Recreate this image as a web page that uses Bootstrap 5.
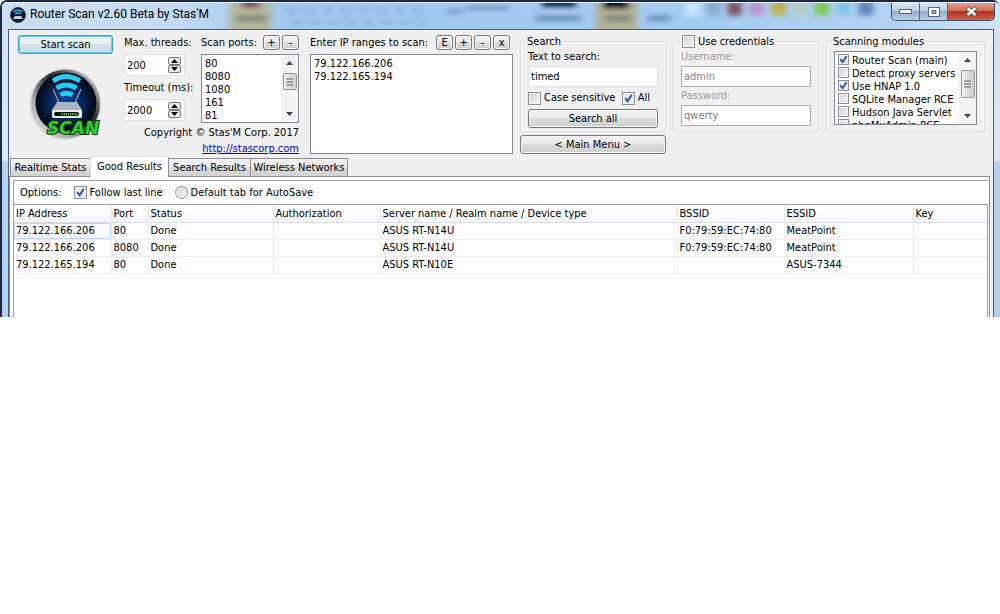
<!DOCTYPE html>
<html lang="en">
<head>
<meta charset="utf-8">
<meta name="viewport" content="width=device-width, initial-scale=1">
<title>Router Scan v2.60 Beta by Stas'M</title>
<link rel="stylesheet" href="https://cdn.jsdelivr.net/npm/bootstrap@5.3.0/dist/css/bootstrap.min.css">
<style>
body{background:#fff;color:#000;font:11px/14px "DejaVu Sans Condensed","DejaVu Sans",sans-serif}
.win{border:2px solid #1b2a42;border-right-width:0;border-bottom:0;border-radius:7px 7px 0 0;padding:0 6px;background:linear-gradient(#cfe0f1 0,#dce8f4 158px,#b4d1f2 160px)}
.glass{margin:0 -6px;height:27px;overflow:hidden;border-top:1px solid #e4effa;border-radius:5px 5px 0 0;background:linear-gradient(90deg,#cbdff2 0,#c3dbf3 180px,#a3c8ef 260px,#a5cbf2 70%,#b4d3f2 90%,#d3e5f7)}
.haze{left:0;top:0;width:100%;height:100%}
.caption{font:12px/16px Roboto,"Open Sans",sans-serif;padding-top:2px}
.winbtns{border:1px solid #3c5068;border-top:0;border-radius:0 0 5px 5px;overflow:hidden;height:18px;margin-right:5px}
.winbtns button{border:0;padding:0;width:28px;border-right:1px solid #50657f;background:linear-gradient(#d8e4f0,#b9cbe0 48%,#93abc8 50%,#bdd2e9);display:grid;place-items:center}
.winbtns .shut{width:46px;border-right:0;background:linear-gradient(#e3a296,#cf6a59 48%,#b3311c 50%,#d2614a)}
.client{background:#f0f0f0;border:1px solid #4a6076;border-bottom:0}
.tools{padding:5px 8px 0 9px}
.w-start{width:95px}
.mid{width:175px}
.spin{width:61px}
.ports{width:98px}
.side{width:146px;flex:none}
.mods{width:159px;flex:none}
.gap-a{gap:11px}.gap-b{gap:7px}.gap-s{gap:2px}
.cap{height:16px;line-height:16px;margin-bottom:3px;white-space:nowrap}
.wbtn{border:1px solid #777;border-radius:3px;background:linear-gradient(#f3f3f3,#ebebeb 48%,#dcdcdc 50%,#cfcfcf);box-shadow:inset 0 0 0 1px #fafafa;color:#000;padding:0;height:19px;line-height:16px;font-size:11px;display:block;width:100%}
.wbtn.hot{border-color:#3c9fc8;box-shadow:inset 0 0 0 1px #5fd0f4;background:linear-gradient(#eef5f9,#e6eff4 48%,#d5e2ea 50%,#cbdbe5)}
.wbtn.tiny{width:17px;height:15px;line-height:12px;flex:none}
.field{border:1px solid #dfe2e6;border-radius:0;background:#fff;color:#000;font:inherit;padding:0 2px;height:21px;width:100%;min-width:0;display:block}
.field:disabled{border-color:#afafaf;color:#838383;background:#fff}
.spinner{background:#fff;border:1px solid #e3e3e3;height:22px;padding-right:3px}
.spinner input{border:0;height:20px}
.updown{width:13px;flex:none}
.updown button{width:13px;height:8px;border:1px solid #777;border-radius:2px;background:#eee;padding:0;display:grid;place-items:center}
.inset{border:1px solid #828790;background:#fff}
.memo{border:0;resize:none;font:inherit;line-height:13px;padding:2px 3px;overflow:hidden;color:#000;background:#fff;min-width:0}
.memo.tall{border:1px solid #828790;height:100px;width:100%;display:block}
.portbox{height:69px}
.vbar{width:17px;flex:none;background:#f4f4f4;padding:6px 1px}
.thumb{width:14px;height:17px;border:1px solid #969696;border-radius:2px;background:linear-gradient(90deg,#f5f5f5,#dcdcdc 50%,#cfcfcf);display:grid;place-items:center}
.thumb.long{height:28px}
.group{border:1px solid #dcdcdc;border-radius:3px;box-shadow:inset 0 0 0 1px #fbfbfb;padding:2px 7px 5px;height:97px}
.group legend{float:none;width:auto;font-size:11px;line-height:13px;height:13px;margin:0 0 0 -2px;padding:0 1px;white-space:nowrap}
.group.cred legend{margin-left:0}
.tick.form-check-input{width:13px;height:13px;margin:0;border:1px solid #8e8f8f;border-radius:0;background:linear-gradient(135deg,#cfd3d8,#f6f6f6);box-shadow:inset 0 0 0 1px #f4f4f4;flex:none;float:none}
.tick.form-check-input:checked{background:#e4ebf5 url("data:image/svg+xml,%3Csvg xmlns='http://www.w3.org/2000/svg' viewBox='0 0 11 11'%3E%3Cpath d='M2.2 5.2 4.6 8.3 8.8 1.8' fill='none' stroke='%233c5596' stroke-width='2'/%3E%3C/svg%3E") center/11px no-repeat}
.tick.form-check-input[type=radio]{border-radius:50%}
.off{color:#9a9a9a}
.modbox{height:74px;padding-left:3px;margin-top:1px}
.modlist{overflow:hidden;padding-top:2px}
.modlist label{height:13px;line-height:13px;gap:3px;white-space:nowrap}
.modlist .tick{width:11px;height:11px}
.tabs{padding-left:2px;border:0;margin-bottom:-1px;height:22px;flex-wrap:nowrap}
.tabs .nav-link{border:1px solid #8c8e94;margin:0 0 0 -1px;border-radius:0;padding:0;height:19px;line-height:18px;color:#000;background:linear-gradient(#f2f2f2,#ebebeb 48%,#dddddd 50%,#d2d2d2);font-size:11px;white-space:nowrap;text-align:center}
.tabs .nav-link.active{background:#fff;border-bottom-color:#fff;height:21px;color:#000}
.t1{width:81px}.t2{width:79px}.t3{width:83px}.t4{width:98px}
.pane{border:1px solid #8c8e94;border-bottom:0;background:#fff;margin-right:3px;padding:3px 1px 0 3px}
.opts{border:1px solid #a0a0a0;border-width:1px 0 0 1px;height:24px;padding-left:6px;gap:12px}
.results{border:1px solid #a0a0a0;border-bottom:0;min-height:113px}
.grid-t{table-layout:fixed;width:100%;border-collapse:collapse;line-height:16px}
.grid-t th{font-weight:400;background:linear-gradient(#fff 40%,#f3f5f9);border-right:1px solid #e3e6ea;border-bottom:1px solid #dcdfe4;padding:1px 0 0 2px;white-space:nowrap}
.grid-t td{border-right:1px solid #f0f0f0;border-bottom:1px solid #ececec;padding:0 0 0 2px;height:17px;white-space:nowrap}
.grid-t td.sel{box-shadow:inset 0 0 0 1px #bdd5ee;border-radius:2px;background:#f8fbfe}
.grid-t th:last-child,.grid-t td:last-child{border-right:0}
.c1{width:97px}.c2{width:37px}.c3{width:125px}.c4{width:107px}.c6{width:107px}.c7{width:129px}.c8{width:74px}
.site{color:#0000e0}
.mb-line{margin-bottom:2px}
.checks{gap:3px}
.mt-menu{margin-top:3px}
.credit{line-height:16px;padding-top:2px;margin-bottom:-2px}
</style>
</head>
<body>
<main class="win">
  <header class="glass d-flex align-items-start position-relative">
    <svg class="haze position-absolute" viewBox="0 0 1000 27" preserveAspectRatio="none" aria-hidden="true">
      <defs><filter id="b" x="-30%" y="-60%" width="160%" height="220%"><feGaussianBlur stdDeviation="3"/></filter></defs>
      <g filter="url(#b)">
        <rect x="228" y="-6" width="42" height="38" fill="#b4b79f"/><rect x="240" y="-5" width="18" height="10" fill="#7b4757"/><rect x="234" y="13" width="31" height="6" fill="#7e8278"/>
        <path d="M285 8H428M290 20H430" stroke="#8aaed6" stroke-width="6" stroke-dasharray="11 7" opacity=".7"/>
        <path d="M446 9h16M466 5h42" stroke="#6d8db4" stroke-width="4"/>
        <rect x="541" y="-6" width="34" height="10" fill="#16264c"/><rect x="534" y="13" width="46" height="6" fill="#6d90ba"/>
        <rect x="595" y="-6" width="42" height="40" fill="#b1b298"/><rect x="602" y="-6" width="26" height="12" fill="#000"/><rect x="604" y="13" width="26" height="6" fill="#7b8077"/>
        <rect x="646" y="13" width="24" height="6" fill="#6a8fbc"/>
        <rect x="684" y="-2" width="16" height="15" fill="#c9e4fc"/><rect x="706" y="-2" width="14" height="15" fill="#8caacb"/><rect x="727" y="-2" width="14" height="15" fill="#7d5563"/><rect x="749" y="-2" width="14" height="15" fill="#c093c8"/><rect x="771" y="-2" width="15" height="15" fill="#c0b050"/><rect x="793" y="-2" width="14" height="15" fill="#b2ccc0"/><rect x="814" y="-2" width="15" height="15" fill="#80c860"/><rect x="836" y="-2" width="14" height="15" fill="#80c4ec"/><rect x="858" y="-2" width="15" height="15" fill="#6484bc"/>
      </g>
    </svg>
    <div class="d-flex align-items-center flex-grow-1 position-relative ps-2">
      <svg class="mt-1" width="16" height="16" viewBox="0 0 16 16" aria-hidden="true"><circle cx="8" cy="8" r="7.5" fill="#0a1830" stroke="#333c48"/><path d="M3.5 4.8Q8 1.5 12.500 4.8M5 7Q8 4.800 11 7" fill="none" stroke="#22bfe8" stroke-width="1.5"/><path d="M5 9h6l2 3H3z" fill="#c5d2dd"/></svg>
      <span class="caption ms-1">Router Scan v2.60 Beta by Stas'M</span>
    </div>
    <div class="winbtns d-flex position-relative">
      <button type="button" aria-label="Minimize"><svg width="13" height="6"><rect x=".5" y=".5" width="12" height="4" fill="#fff" stroke="#566579"/></svg></button>
      <button type="button" aria-label="Maximize"><svg width="12" height="10"><path d="M.5.500h11v9H.5zM4 3.500v3h4v-3z" fill="#fff" fill-rule="evenodd" stroke="#566579"/></svg></button>
      <button type="button" class="shut" aria-label="Close"><svg width="13" height="11"><path d="M2 1.500l9 8M11 1.500l-9 8" stroke="#6b4a50" stroke-width="4"/><path d="M2.500 2l8 7M10.500 2l-8 7" stroke="#fff" stroke-width="2.400"/></svg></button>
    </div>
  </header>

  <div class="client">
    <div class="tools d-flex align-items-start gap-b">
      <div class="d-flex flex-grow-1 gap-a align-items-start">
        <div class="w-start flex-shrink-0">
          <button type="button" class="wbtn hot mt-px">Start scan</button>
          <svg class="d-block mx-auto mt-2" width="80" height="82" viewBox="0 0 80 82" role="img" aria-label="Scan logo">
            <defs>
              <radialGradient id="core" cx=".5" cy=".5" r=".5"><stop offset="0" stop-color="#0c48a0"/><stop offset=".6" stop-color="#06224f"/><stop offset="1" stop-color="#020510"/></radialGradient>
              <linearGradient id="ring" x1="0" y1="1" x2="1" y2="0"><stop offset="0" stop-color="#f4f4f4"/><stop offset=".3" stop-color="#a8a8a8"/><stop offset=".6" stop-color="#2b2b2b"/><stop offset="1" stop-color="#e8e8e8"/></linearGradient>
            </defs>
            <circle cx="39.500" cy="42" r="36" fill="#dcdcdc"/>
            <circle cx="39.500" cy="42" r="34.500" fill="url(#ring)"/>
            <circle cx="40" cy="41" r="30.500" fill="url(#core)"/>
            <path d="M27 19Q40 10 54 19M30.500 26Q40 20 50.500 26M34.500 33Q40 29.500 46.500 33" fill="none" stroke="#21cdf3" stroke-width="5"/>
            <path d="M27 27l7 16M55 27l-7 16" stroke="#8fa3bb" stroke-width="1.200"/>
            <path d="M31 40h20l5 8v6q0 2-2 2H28q-2 0-2-2v-6z" fill="#aab4c2"/><path d="M26 48h30v6q0 2-2 2H28q-2 0-2-2z" fill="#e9edf2"/>
            <rect x="28" y="50" width="25" height="4" rx="2" fill="#071008"/><path d="M36 52h15" stroke="#54d93d" stroke-width="2" stroke-dasharray="1 1"/>
            <text x="21" y="72" font-family="DejaVu Sans, sans-serif" font-weight="700" font-style="italic" font-size="17" fill="#2fd02a" stroke="#063a06" stroke-width="2" paint-order="stroke">SCAN</text>
          </svg>
        </div>
        <div class="mid flex-shrink-0">
          <div class="d-flex justify-content-between">
            <div class="spin">
              <label class="cap d-block" for="thr">Max. threads:</label>
              <div class="spinner d-flex align-items-center mb-1">
                <input class="field" id="thr" value="200">
                <div class="updown"><button type="button" aria-label="More threads"><svg width="7" height="4"><path d="M0 4 3.500 0 7 4z"/></svg></button><button type="button" aria-label="Fewer threads"><svg width="7" height="4"><path d="M0 0 3.500 4 7 0z"/></svg></button></div>
              </div>
              <label class="cap d-block" for="tmo">Timeout (ms):</label>
              <div class="spinner d-flex align-items-center">
                <input class="field" id="tmo" value="2000">
                <div class="updown"><button type="button" aria-label="Longer timeout"><svg width="7" height="4"><path d="M0 4 3.500 0 7 4z"/></svg></button><button type="button" aria-label="Shorter timeout"><svg width="7" height="4"><path d="M0 0 3.500 4 7 0z"/></svg></button></div>
              </div>
            </div>
            <div class="ports">
              <div class="cap d-flex gap-s"><label class="flex-grow-1" for="prt">Scan ports:</label><button type="button" class="wbtn tiny">+</button><button type="button" class="wbtn tiny">-</button></div>
              <div class="inset portbox d-flex">
                <textarea class="memo flex-grow-1" id="prt" cols="4">80
8080
1080
161
81</textarea>
                <div class="vbar d-flex flex-column align-items-center"><svg width="7" height="4"><path d="M0 4 3.500 0 7 4z" fill="#444"/></svg><div class="thumb mt-2"><svg width="8" height="8"><path d="M0 1h7M0 4h7M0 7h7" stroke="#666"/></svg></div><svg class="mt-auto" width="7" height="4"><path d="M0 0 3.500 4 7 0z" fill="#444"/></svg></div>
              </div>
            </div>
          </div>
          <div class="text-end text-nowrap credit">Copyright © Stas'M Corp. 2017<br><a class="site" href="http://stascorp.com">http://stascorp.com</a></div>
        </div>
        <div class="flex-grow-1">
          <div class="cap d-flex"><label for="rng">Enter IP ranges to scan:</label><span class="d-flex gap-s ms-2"><button type="button" class="wbtn tiny">E</button><button type="button" class="wbtn tiny">+</button><button type="button" class="wbtn tiny">-</button><button type="button" class="wbtn tiny">x</button></span></div>
          <textarea class="memo tall" id="rng">79.122.166.206
79.122.165.194</textarea>
        </div>
      </div>

      <div class="side">
        <fieldset class="group">
          <legend>Search</legend>
          <label class="d-block mb-line" for="q">Text to search:</label>
          <input class="field" id="q" value="timed">
          <div class="d-flex align-items-center py-1 checks">
            <input class="tick form-check-input" type="checkbox" id="cs"><label for="cs" class="text-nowrap">Case sensitive</label>
            <input class="tick form-check-input ms-auto" type="checkbox" id="all" checked><label for="all" class="pe-2">All</label>
          </div>
          <button type="button" class="wbtn">Search all</button>
        </fieldset>
        <button type="button" class="wbtn mt-menu">&lt; Main Menu &gt;</button>
      </div>

      <fieldset class="group cred side">
        <legend class="d-flex checks"><input class="tick form-check-input" type="checkbox" id="uc"><label for="uc">Use credentials</label></legend>
        <label class="d-block off mb-line" for="us">Username:</label>
        <input class="field mb-line" id="us" value="admin" disabled>
        <label class="d-block off mb-line" for="pw">Password:</label>
        <input class="field" id="pw" value="qwerty" disabled>
      </fieldset>

      <fieldset class="group mods">
        <legend>Scanning modules</legend>
        <div class="inset modbox d-flex">
          <div class="modlist flex-grow-1">
            <label class="d-flex"><input class="tick form-check-input" type="checkbox" checked>Router Scan (main)</label>
            <label class="d-flex"><input class="tick form-check-input" type="checkbox">Detect proxy servers</label>
            <label class="d-flex"><input class="tick form-check-input" type="checkbox" checked>Use HNAP 1.0</label>
            <label class="d-flex"><input class="tick form-check-input" type="checkbox">SQLite Manager RCE</label>
            <label class="d-flex"><input class="tick form-check-input" type="checkbox">Hudson Java Servlet</label>
            <label class="d-flex"><input class="tick form-check-input" type="checkbox">phpMyAdmin RCE</label>
          </div>
          <div class="vbar d-flex flex-column align-items-center"><svg width="7" height="4"><path d="M0 4 3.500 0 7 4z" fill="#444"/></svg><div class="thumb long mt-2"><svg width="8" height="8"><path d="M0 1h7M0 4h7M0 7h7" stroke="#666"/></svg></div><svg class="mt-auto" width="7" height="4"><path d="M0 0 3.500 4 7 0z" fill="#444"/></svg></div>
        </div>
      </fieldset>
    </div>

    <nav class="nav nav-tabs tabs align-items-end position-relative">
      <button type="button" class="nav-link t1">Realtime Stats</button>
      <button type="button" class="nav-link t2 active">Good Results</button>
      <button type="button" class="nav-link t3">Search Results</button>
      <button type="button" class="nav-link t4">Wireless Networks</button>
    </nav>
    <section class="pane">
      <div class="opts d-flex align-items-center">
        <span>Options:</span>
        <span class="d-flex checks"><input class="tick form-check-input" type="checkbox" id="fl" checked><label for="fl">Follow last line</label></span>
        <span class="d-flex checks"><input class="tick form-check-input" type="radio" id="dt"><label for="dt">Default tab for AutoSave</label></span>
      </div>
      <div class="results">
        <table class="grid-t">
          <colgroup><col class="c1"><col class="c2"><col class="c3"><col class="c4"><col><col class="c6"><col class="c7"><col class="c8"></colgroup>
          <thead><tr><th>IP Address</th><th>Port</th><th>Status</th><th>Authorization</th><th>Server name / Realm name / Device type</th><th>BSSID</th><th>ESSID</th><th>Key</th></tr></thead>
          <tbody>
            <tr><td class="sel">79.122.166.206</td><td>80</td><td>Done</td><td></td><td>ASUS RT-N14U</td><td>F0:79:59:EC:74:80</td><td>MeatPoint</td><td></td></tr>
            <tr><td>79.122.166.206</td><td>8080</td><td>Done</td><td></td><td>ASUS RT-N14U</td><td>F0:79:59:EC:74:80</td><td>MeatPoint</td><td></td></tr>
            <tr><td>79.122.165.194</td><td>80</td><td>Done</td><td></td><td>ASUS RT-N10E</td><td></td><td>ASUS-7344</td><td></td></tr>
          </tbody>
        </table>
      </div>
    </section>
  </div>
</main>
<script src="https://cdn.jsdelivr.net/npm/bootstrap@5.3.0/dist/js/bootstrap.bundle.min.js"></script>
</body>
</html>
